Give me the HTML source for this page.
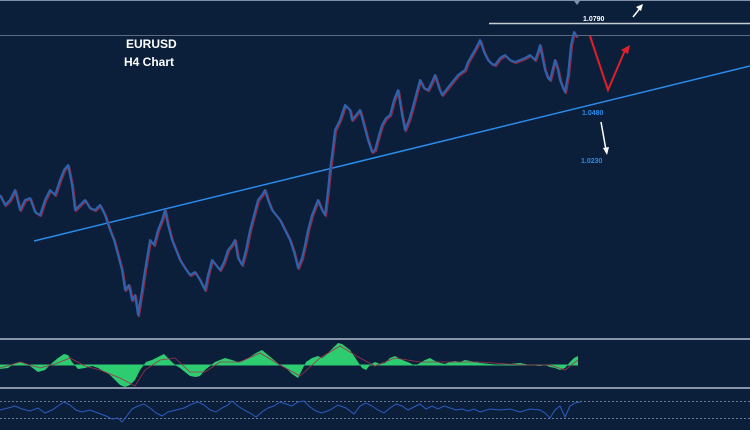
<!DOCTYPE html>
<html><head><meta charset="utf-8"><style>
html,body{margin:0;padding:0;background:#0b1f3b;width:750px;height:430px;overflow:hidden}
svg{display:block}
</style></head><body>
<svg width="750" height="430" viewBox="0 0 750 430" xmlns="http://www.w3.org/2000/svg" font-family="Liberation Sans, sans-serif">
<rect width="750" height="430" fill="#0b1f3b"/>
<line x1="0" y1="35.5" x2="750" y2="35.5" stroke="#5a6a85" stroke-width="1"/>
<line x1="0" y1="0.5" x2="750" y2="0.5" stroke="#8090a8" stroke-width="1"/>
<polygon points="574,1 580,1 577,5" fill="#8090a8"/>
<line x1="489" y1="23.5" x2="750" y2="23.5" stroke="#c8ccd4" stroke-width="1.5"/>
<text x="583" y="21" fill="#ffffff" font-size="7" font-weight="bold">1.0790</text>
<text x="126" y="48" fill="#ffffff" font-size="12" font-weight="bold">EURUSD</text>
<text x="124" y="66" fill="#ffffff" font-size="12" font-weight="bold">H4 Chart</text>
<!-- trendline -->
<line x1="34" y1="241" x2="750" y2="66" stroke="#2b8be8" stroke-width="1.5"/>
<text x="582" y="115" fill="#2b8be8" font-size="7" font-weight="bold">1.0480</text>
<text x="581" y="163" fill="#2b8be8" font-size="7" font-weight="bold">1.0230</text>
<!-- price -->
<g fill="none" stroke-linejoin="round">
<polyline stroke="#8a2a45" stroke-width="2.2" transform="translate(1,1)" points="0,195 5,205 10,200 15,190 20,210 25,200 30,198 35,212 40,215 45,200 50,190 55,195 60,180 64,170 68,165 72,185 75,210 80,205 85,200 90,208 95,210 100,205 105,215 110,230 114,240 118,255 122,270 125,290 129,285 132,300 135,295 138,315 142,290 145,270 150,240 154,245 158,230 162,220 165,210 168,225 172,240 176,250 180,260 185,268 190,275 195,272 200,280 205,290 208,275 212,260 216,265 220,270 224,262 228,250 232,245 235,240 238,258 242,265 246,250 250,230 254,215 258,200 262,195 265,190 268,200 272,210 276,215 280,220 285,230 290,240 294,252 298,268 302,258 305,245 308,230 312,215 316,205 318,200 322,210 325,215 328,190 330,170 332,155 335,130 340,120 345,105 350,110 352,120 356,115 360,110 364,125 368,140 372,152 375,150 379,135 382,125 386,118 390,115 394,100 398,90 402,115 405,130 409,120 412,110 416,95 420,80 424,88 428,90 432,82 435,75 439,88 442,95 446,90 450,85 454,80 458,75 462,72 465,70 468,62 472,55 476,48 480,40 484,52 488,60 492,64 495,65 500,58 505,55 510,60 515,62 520,60 525,58 530,55 535,60 538,52 540,45 543,60 545,70 548,78 550,80 553,68 555,60 558,70 560,80 563,88 565,92 567,80 568,75 570,55 571,45 573,36 574,32 576,36 577,35"/>
<polyline stroke="#2a64b0" stroke-width="2" points="0,195 5,205 10,200 15,190 20,210 25,200 30,198 35,212 40,215 45,200 50,190 55,195 60,180 64,170 68,165 72,185 75,210 80,205 85,200 90,208 95,210 100,205 105,215 110,230 114,240 118,255 122,270 125,290 129,285 132,300 135,295 138,315 142,290 145,270 150,240 154,245 158,230 162,220 165,210 168,225 172,240 176,250 180,260 185,268 190,275 195,272 200,280 205,290 208,275 212,260 216,265 220,270 224,262 228,250 232,245 235,240 238,258 242,265 246,250 250,230 254,215 258,200 262,195 265,190 268,200 272,210 276,215 280,220 285,230 290,240 294,252 298,268 302,258 305,245 308,230 312,215 316,205 318,200 322,210 325,215 328,190 330,170 332,155 335,130 340,120 345,105 350,110 352,120 356,115 360,110 364,125 368,140 372,152 375,150 379,135 382,125 386,118 390,115 394,100 398,90 402,115 405,130 409,120 412,110 416,95 420,80 424,88 428,90 432,82 435,75 439,88 442,95 446,90 450,85 454,80 458,75 462,72 465,70 468,62 472,55 476,48 480,40 484,52 488,60 492,64 495,65 500,58 505,55 510,60 515,62 520,60 525,58 530,55 535,60 538,52 540,45 543,60 545,70 548,78 550,80 553,68 555,60 558,70 560,80 563,88 565,92 567,80 568,75 570,55 571,45 573,36 574,32 576,36 577,35"/>
</g>
<!-- arrows -->
<polyline points="590,36 608,90 626,48" fill="none" stroke="#e0202a" stroke-width="2"/>
<polygon points="630,45 621,50 628,54" fill="#e0202a"/>
<line x1="633" y1="17" x2="641" y2="7" stroke="#fff" stroke-width="1.5"/>
<polygon points="643,4 636,7 641,11" fill="#fff"/>
<line x1="601" y1="122" x2="606" y2="150" stroke="#fff" stroke-width="1.5"/>
<polygon points="607,155 603,148 609,147" fill="#fff"/>
<!-- separators -->
<rect x="0" y="338" width="750" height="2" fill="#8a95a8"/>
<rect x="0" y="387" width="750" height="2" fill="#8a95a8"/>
<!-- oscillator -->
<polygon fill="#2ecc71" points="0,365 0,369 8,368 15,363 22,362 30,366 38,372 45,370 52,363 58,358 64,354 68,355 72,362 78,369 85,368 92,366 98,368 105,372 110,375 115,380 120,385 125,387 130,385 135,380 140,370 146,362 152,360 158,357 164,354 170,360 175,365 180,368 185,372 190,376 196,377 200,376 205,370 210,366 215,362 220,360 225,358 232,360 238,362 244,360 250,357 256,353 262,350 268,355 274,360 280,365 286,368 292,374 298,378 302,370 306,362 312,358 318,356 322,358 326,355 330,351 334,347 338,343 342,344 346,347 350,350 354,356 358,362 362,368 366,370 370,365 375,362 380,364 385,363 390,358 395,356 400,359 405,361 410,363 415,366 420,363 425,360 430,358 435,361 440,363 445,364 450,362 455,361 460,362 465,360 470,361 475,362 480,363 490,364 500,365 510,364 520,363 530,365 540,366 545,365 550,367 555,368 560,370 565,368 570,362 574,358 578,356 578,365"/>
<line x1="0" y1="365" x2="578" y2="365" stroke="#2ecc71" stroke-width="1"/>
<polyline fill="none" stroke="#a0304a" stroke-width="0.8" points="0,368 20,362 40,368 55,364 70,358 85,366 100,370 120,378 135,386 145,370 160,360 175,358 190,372 205,372 220,362 240,362 260,353 280,365 300,376 320,358 340,346 360,358 375,366 395,358 420,362 445,362 480,362 520,365 550,365 565,370 578,360"/>
<!-- bottom indicator -->
<line x1="0" y1="401.5" x2="750" y2="401.5" stroke="#6a7890" stroke-dasharray="2,2"/>
<line x1="0" y1="418.5" x2="750" y2="418.5" stroke="#6a7890" stroke-dasharray="2,2"/>
<polyline fill="none" stroke="#2a5cc0" stroke-width="1" points="0,410 8,408 15,406 22,409 30,411 38,408 45,413 52,410 58,406 64,402 70,405 76,410 82,412 90,410 98,413 106,416 112,419 118,418 122,422 126,417 132,409 138,406 144,404 150,408 156,413 162,416 168,412 176,410 184,408 192,404 198,402 204,405 210,410 216,412 222,408 228,405 232,401 238,406 244,410 250,413 256,417 262,412 268,408 274,406 280,402 286,404 292,406 298,402 304,401 310,407 316,411 322,413 330,410 338,405 346,408 354,414 360,406 366,403 372,406 378,410 384,413 390,408 396,404 402,406 408,410 414,407 420,404 426,409 432,406 438,409 444,406 450,408 456,410 462,409 468,411 474,409 480,412 490,409 500,410 510,409 520,412 530,409 540,410 545,413 550,418 555,410 560,406 565,417 570,406 575,403 580,402"/>
</svg>
</body></html>
